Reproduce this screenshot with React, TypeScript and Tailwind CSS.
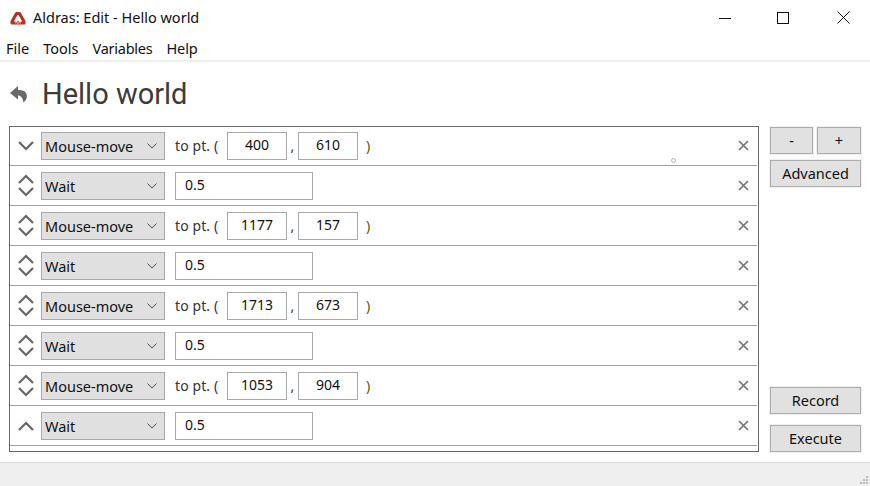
import React from 'react'

const steps = [
  { type: 'move', x: '400', y: '610', up: false, down: true },
  { type: 'wait', up: true, down: true },
  { type: 'move', x: '1177', y: '157', up: true, down: true },
  { type: 'wait', up: true, down: true },
  { type: 'move', x: '1713', y: '673', up: true, down: true },
  { type: 'wait', up: true, down: true },
  { type: 'move', x: '1053', y: '904', up: true, down: true },
  { type: 'wait', up: true, down: false },
]

const Chevron = ({ up }: { up?: boolean }) => (
  <svg width="16" height="10" viewBox="0 0 16 10" fill="none" stroke="#666666" strokeWidth="2.2">
    <path d={up ? 'M1 9 L8 2 L15 9' : 'M1 1 L8 8 L15 1'} />
  </svg>
)

const Btn = ({ label, className }: { label: string; className: string }) => (
  <div className={`h-[27px] flex items-center justify-center bg-[#e1e1e1] border border-[#adadad] outline outline-1 outline-[#f0f0f0] text-[14.5px] text-[#111] ${className}`}>
    {label}
  </div>
)

const Box = ({ value, className }: { value: string; className: string }) => (
  <div className={`h-[28px] flex items-center pb-[2px] bg-white border border-[#a9a9a9] text-[14px] text-[#111] ${className}`}>
    {value}
  </div>
)

const Row = ({ step }: { step: (typeof steps)[number] }) => (
  <div className="h-[40px] shrink-0 mr-[1px] border-b border-[#a0a0a0] flex items-center relative">
    <div className="w-[31px] flex flex-col items-center gap-[3px] shrink-0 pl-[1px]">
      {step.up && <Chevron up />}
      {step.down && <Chevron />}
    </div>
    <div className="w-[124px] h-[28px] shrink-0 bg-[#e0e0e0] border border-[#a9a9a9] flex items-center justify-between pl-[3px] pr-[7px] text-[14.5px] text-[#111]">
      <span className="pt-[2px]">{step.type === 'move' ? 'Mouse-move' : 'Wait'}</span>
      <svg width="10" height="6" viewBox="0 0 10 6" fill="none" stroke="#555" strokeWidth="1">
        <path d="M0.5 0.5 L5 5 L9.5 0.5" />
      </svg>
    </div>
    {step.type === 'move' ? (
      <div className="flex items-center ml-[10px] text-[14px] text-[#333]">
        <span className="w-[52px] tracking-[0.1px]">to pt. (</span>
        <Box value={step.x ?? ''} className="w-[60px] justify-center" />
        <span className="w-[11px] text-center">,</span>
        <Box value={step.y ?? ''} className="w-[60px] justify-center" />
        <span className="ml-[8px] text-[#7a4a20]">)</span>
      </div>
    ) : (
      <Box value="0.5" className="w-[138px] ml-[10px] pl-[9px]" />
    )}
    <svg className="absolute right-[8px] top-[14px]" width="11" height="11" viewBox="0 0 11 11" stroke="#757575" strokeWidth="1.7">
      <path d="M1 1 L10 10 M10 1 L1 10" />
    </svg>
  </div>
)

const App = () => {
  return (
    <div className="w-[870px] h-[486px] bg-white flex flex-col overflow-hidden font-['Noto_Sans','Open_Sans',sans-serif]">
      <div className="h-[35px] shrink-0 flex items-center pl-[10px] relative">
        <svg className="mt-[1px]" width="16" height="14" viewBox="0 0 16 14" fill="none">
          <path d="M5.6 12 L2 12 L2 10.5 L6.5 2.5 L9.5 2.5 L14 10.5 L14 12 L10.4 12" stroke="#b5321e" strokeWidth="3" strokeLinejoin="round" />
          <path d="M8 9.5 L5 13.5 L11 13.5 Z" fill="#d4231f" />
          <path d="M8 11 L6.8 12.6 L9.2 12.6 Z" fill="#ffffff" />
        </svg>
        <span className="ml-[7px] pt-[1px] text-[14.5px] text-[#111]">Aldras: Edit - Hello world</span>
        <div className="ml-auto flex items-center">
          <svg className="mr-[46px]" width="12" height="12" viewBox="0 0 12 12" stroke="#111" fill="none"><path d="M0 6.5 H12" /></svg>
          <svg className="mr-[48px]" width="12" height="12" viewBox="0 0 12 12" stroke="#111" fill="none"><rect x="0.5" y="0.5" width="11" height="11" /></svg>
          <svg className="mr-[20px]" width="13" height="13" viewBox="0 0 13 13" stroke="#111" fill="none"><path d="M0.5 0.5 L12.5 12.5 M12.5 0.5 L0.5 12.5" /></svg>
        </div>
      </div>
      <div className="h-[27px] shrink-0 flex items-center gap-[14px] pl-[6px] pt-[3px] border-b-2 border-[#f0f0f0] text-[14.5px] text-[#111]">
        <span>File</span>
        <span>Tools</span>
        <span className="tracking-[-0.25px]">Variables</span>
        <span className="tracking-[-0.1px]">Help</span>
      </div>
      <div className="h-[64px] shrink-0 flex items-center pl-[10px]">
        <svg width="18" height="18" viewBox="0 0 18 18" fill="#696969">
          <path d="M8 1 L0 8 L8 14.5 L8 10.5 C11 10.5 12.5 12.5 13.5 17.5 C16.5 15 18 11.5 16 8 C14.5 5.5 11.5 4.8 8 5 Z" />
        </svg>
        <span className="ml-[14px] font-['Roboto',sans-serif] text-[29px] leading-none text-[#3c3c3c]">Hello world</span>
      </div>
      <div className="flex-1 flex items-start pl-[9px] pr-[9px]">
        <div className="w-[750px] h-[326px] border border-[#696969] flex flex-col overflow-hidden relative">
          <div className="flex flex-col -mt-[1px]">
            {steps.map((step, i) => (
              <Row key={i} step={step} />
            ))}
          </div>
          <div className="absolute left-[661px] top-[31px] w-[5px] h-[5px] rounded-full border border-[#b5b5b5] bg-white" />
        </div>
        <div className="ml-[11px] w-[91px] h-[326px] flex flex-col pt-[1px]">
          <div className="flex gap-[4px]">
            <Btn label="-" className="w-[43px]" />
            <Btn label="+" className="w-[44px]" />
          </div>
          <Btn label="Advanced" className="mt-[6px] w-[91px]" />
          <Btn label="Record" className="mt-auto w-[91px]" />
          <Btn label="Execute" className="mt-[11px] w-[91px]" />
        </div>
      </div>
      <div className="h-[24px] shrink-0 bg-[#efefef] border-t border-[#d9d9d9] relative">
        <svg className="absolute right-[1px] bottom-[1px]" width="10" height="10" viewBox="0 0 10 10" fill="#bcbcbc">
          <rect x="7" y="1" width="2" height="2" />
          <rect x="4" y="4" width="2" height="2" />
          <rect x="7" y="4" width="2" height="2" />
          <rect x="1" y="7" width="2" height="2" />
          <rect x="4" y="7" width="2" height="2" />
          <rect x="7" y="7" width="2" height="2" />
        </svg>
      </div>
    </div>
  )
}

export default App
